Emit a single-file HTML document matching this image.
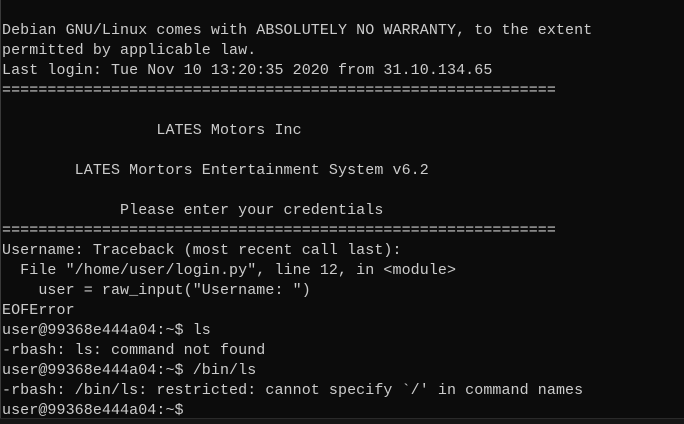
<!DOCTYPE html>
<html><head><meta charset="utf-8"><style>
html,body{margin:0;padding:0;background:#0c0c0c;width:684px;height:423px;overflow:hidden;}
pre{position:absolute;left:2px;top:21px;margin:0;font-family:"Liberation Mono",monospace;font-size:15px;line-height:20px;color:#cccccc;letter-spacing:0.08px;}
.bar{position:absolute;left:0;top:418px;width:684px;height:5px;background:#161616;border-top:1px solid #2a2a2a;}
.edge{position:absolute;left:0;top:0;width:1px;height:423px;background:#3a3a3a;}
</style></head><body>
<div class="edge"></div>
<pre>Debian GNU/Linux comes with ABSOLUTELY NO WARRANTY, to the extent
permitted by applicable law.
Last login: Tue Nov 10 13:20:35 2020 from 31.10.134.65
=============================================================

                 LATES Motors Inc

        LATES Mortors Entertainment System v6.2

             Please enter your credentials
=============================================================
Username: Traceback (most recent call last):
  File "/home/user/login.py", line 12, in &lt;module&gt;
    user = raw_input("Username: ")
EOFError
user@99368e444a04:~$ ls
-rbash: ls: command not found
user@99368e444a04:~$ /bin/ls
-rbash: /bin/ls: restricted: cannot specify `/' in command names
user@99368e444a04:~$</pre>
<div class="bar"></div>
</body></html>
